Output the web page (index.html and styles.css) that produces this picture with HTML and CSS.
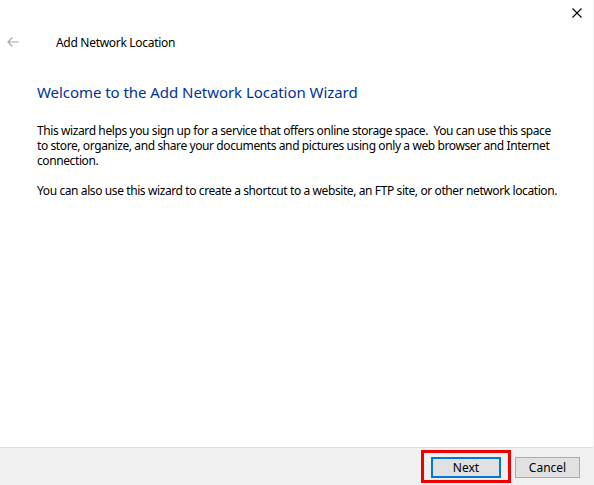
FILE: index.html
```html
<!DOCTYPE html>
<html>
<head>
<meta charset="utf-8">
<link rel="stylesheet" href="styles.css">
</head>
<body>
<div class="window">
  <div class="titlebar">
    <button class="close" aria-label="Close">
      <svg width="10" height="10" viewBox="0 0 10 10"><path d="M0.5 0.5 L9.5 9.5 M9.5 0.5 L0.5 9.5" stroke="#000" stroke-width="1.1" fill="none"/></svg>
    </button>
  </div>
  <div class="header">
    <span class="back">
      <svg width="12" height="10" viewBox="0 0 12 10"><path d="M11.5 5 H1 M5.5 0.5 L1 5 L5.5 9.5" stroke="#a8a8a8" stroke-width="1.2" fill="none"/></svg>
    </span>
    <span class="title">Add Network Location</span>
  </div>
  <main class="content">
    <h1 class="heading">Welcome to the Add Network Location Wizard</h1>
    <p class="para">This wizard helps you sign up for a service that offers online storage space.&nbsp; You can use this space<br>to store, organize, and share your documents and pictures using only a web browser and Internet<br>connection.</p>
    <p class="para">You can also use this wizard to create a shortcut to a website, an FTP site, or other network location.</p>
  </main>
  <footer class="footer">
    <div class="highlight">
      <button class="btn btn-default">Next</button>
    </div>
    <button class="btn">Cancel</button>
  </footer>
</div>
</body>
</html>
```
FILE: styles.css
```css
html, body {
  margin: 0;
  padding: 0;
  background: #fff;
}
body {
  width: 594px;
  height: 485px;
  overflow: hidden;
  font-family: "Noto Sans", "Open Sans", sans-serif;
  font-size: 12px;
  color: #000;
}
.window {
  height: 485px;
  display: flex;
  flex-direction: column;
  border-right: 1px solid #f0f0f0;
  box-sizing: border-box;
}
.titlebar {
  height: 30px;
  display: flex;
  justify-content: flex-end;
}
.close {
  width: 46px;
  height: 30px;
  border: 0;
  background: transparent;
  padding: 0;
  display: flex;
  align-items: flex-start;
  justify-content: flex-start;
  padding-left: 25px;
  padding-top: 8px;
  box-sizing: border-box;
}
.close svg { display: block; }
.header {
  height: 24px;
  display: flex;
  align-items: center;
}
.back {
  width: 49px;
  padding-left: 7px;
  display: flex;
  align-items: center;
}
.back svg { display: block; }
.title {
  font-size: 12px;
  letter-spacing: -0.3px;
  color: #000;
}
.content {
  flex: 1;
  padding-left: 37px;
}
.heading {
  margin: 28px 0 0 0;
  font-size: 15px;
  font-weight: normal;
  color: #003399;
  line-height: 20px;
  letter-spacing: -0.05px;
}
.para {
  margin: 21px 0 0 0;
  line-height: 15px;
  font-size: 12px;
  letter-spacing: -0.4px;
  white-space: nowrap;
}
.para + .para {
  margin-top: 15px;
}
.footer {
  height: 38px;
  box-sizing: border-box;
  border-top: 1px solid #dfdfdf;
  background: #f0f0f0;
  display: flex;
  align-items: flex-start;
  justify-content: flex-end;
  padding-right: 13px;
  padding-top: 2px;
}
.highlight {
  border: 3px solid #ee0000;
  padding: 4px 7px 2px 7px;
  margin-right: 4px;
}
.btn {
  font-family: "Noto Sans", "Open Sans", sans-serif;
  font-size: 12px;
  height: 21px;
  width: 65px;
  padding: 0;
  border: 1px solid #adadad;
  background: #e1e1e1;
  color: #000;
  margin-top: 7px;
  line-height: 17px;
}
.btn-default {
  width: 70px;
  margin-top: 0;
  border: 2px solid #0078d7;
}
```
